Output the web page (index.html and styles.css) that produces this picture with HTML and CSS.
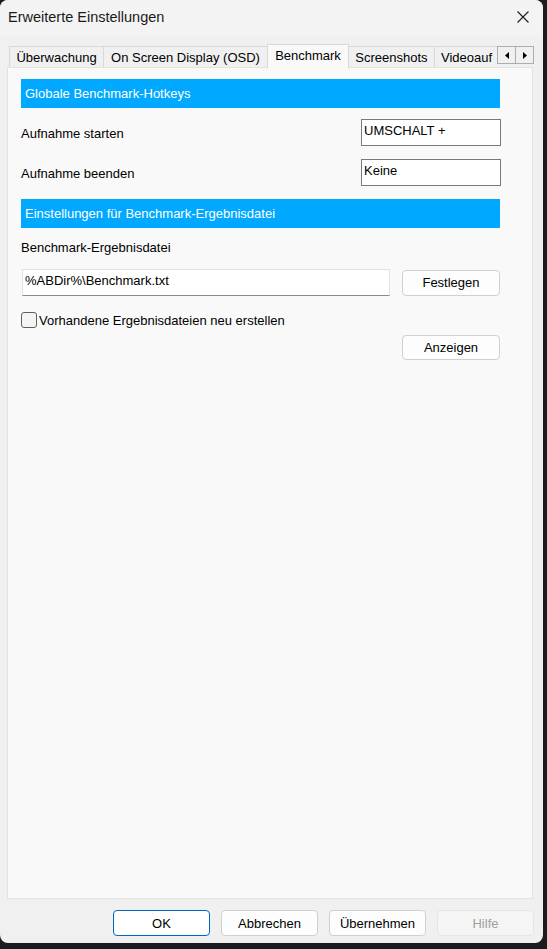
FILE: index.html
```html
<!DOCTYPE html>
<html lang="de">
<head>
<meta charset="utf-8">
<title>Erweiterte Einstellungen</title>
<link rel="stylesheet" href="styles.css">
</head>
<body>
<div class="dialog">
  <div class="titlebar">
    <span class="title">Erweiterte Einstellungen</span>
    <svg class="close" width="12" height="12" viewBox="0 0 12 12" aria-label="Schließen">
      <path d="M0.5 0.5 L11.5 11.5 M11.5 0.5 L0.5 11.5" stroke="#1a1a1a" stroke-width="1.1" fill="none"/>
    </svg>
  </div>

  <div class="tabstrip">
    <div class="tab t1">Überwachung</div>
    <div class="tab t2">On Screen Display (OSD)</div>
    <div class="tab t3 active">Benchmark</div>
    <div class="tab t4">Screenshots</div>
    <div class="tab t5">Videoauf</div>
    <div class="spin">
      <div class="spin-btn left"><svg width="4" height="7" viewBox="0 0 4 7"><path d="M4 0 L0 3.5 L4 7 Z" fill="#000"/></svg></div>
      <div class="spin-btn right"><svg width="4" height="7" viewBox="0 0 4 7"><path d="M0 0 L4 3.5 L0 7 Z" fill="#000"/></svg></div>
    </div>
  </div>

  <div class="panel">
    <div class="section-head">Globale Benchmark-Hotkeys</div>
    <div class="row">
      <span class="label">Aufnahme starten</span>
      <div class="hotkey">UMSCHALT +</div>
    </div>
    <div class="row">
      <span class="label">Aufnahme beenden</span>
      <div class="hotkey">Keine</div>
    </div>
    <div class="section-head">Einstellungen für Benchmark-Ergebnisdatei</div>
    <div class="plain-label">Benchmark-Ergebnisdatei</div>
    <div class="path-row">
      <div class="path-input">%ABDir%\Benchmark.txt</div>
      <div class="btn panel-btn">Festlegen</div>
    </div>
    <div class="check-row">
      <span class="checkbox"></span>
      <span class="check-label">Vorhandene Ergebnisdateien neu erstellen</span>
    </div>
    <div class="btn panel-btn show-btn">Anzeigen</div>
  </div>

  <div class="footer">
    <div class="btn foot-btn default">OK</div>
    <div class="btn foot-btn">Abbrechen</div>
    <div class="btn foot-btn">Übernehmen</div>
    <div class="btn foot-btn disabled">Hilfe</div>
  </div>
</div>
</body>
</html>
```

FILE: styles.css
```css
html, body {
  margin: 0;
  padding: 0;
}

body {
  width: 547px;
  height: 949px;
  background: #1b1c1e;
  font-family: "Liberation Sans", Arial, sans-serif;
  font-size: 13px;
  color: #000;
  overflow: hidden;
}

.dialog {
  width: 543px;
  height: 943px;
  background: #f0f0f0;
  border-radius: 8px;
  overflow: hidden;
  display: flex;
  flex-direction: column;
  box-sizing: border-box;
}

.titlebar {
  height: 36px;
  flex: none;
  display: flex;
  align-items: center;
  justify-content: space-between;
  padding: 0 14px 2px 8px;
  box-sizing: border-box;
  background: #f3f3f3;
}

.title {
  font-size: 14.5px;
  color: #1a1a1a;
}

.close {
  display: block;
}

.tabstrip {
  height: 31px;
  flex: none;
  display: flex;
  align-items: flex-end;
  padding-left: 9px;
  position: relative;
  z-index: 1;
}

.tab {
  height: 21px;
  box-sizing: border-box;
  border: 1px solid #d9d9d9;
  border-bottom: none;
  border-right: none;
  background: #f0f0f0;
  display: flex;
  align-items: center;
  justify-content: center;
  white-space: nowrap;
  padding-top: 1px;
}

.t1 { width: 94px; }
.t2 { width: 164px; }
.t3 { width: 82px; }
.t4 { width: 85px; }
.t5 {
  width: 63px;
  justify-content: flex-start;
  padding-left: 6px;
}

.tab.active {
  height: 24px;
  margin-bottom: -1px;
  background: #f9f9f9;
  border-right: 1px solid #d9d9d9;
  padding-top: 0;
  padding-bottom: 3px;
}

.tab.active + .tab {
  border-left: none;
}

.spin {
  align-self: flex-start;
  margin-top: 10px;
  display: flex;
}

.spin-btn {
  height: 18px;
  box-sizing: border-box;
  border: 1px solid #adadad;
  background: #f0f0f0;
  display: flex;
  align-items: center;
  justify-content: center;
}

.spin-btn.left {
  width: 19px;
}

.spin-btn.right {
  width: 18px;
  border-left: none;
}

.spin-btn svg {
  display: block;
}

.panel {
  flex: none;
  width: 526px;
  height: 832px;
  margin-left: 7px;
  box-sizing: border-box;
  border: 1px solid #e3e3e3;
  background: #f9f9f9;
  padding: 11px 32px 0 13px;
  display: flex;
  flex-direction: column;
}

.section-head {
  height: 29px;
  background: #00a9ff;
  color: #fff;
  display: flex;
  align-items: center;
  padding-left: 4px;
  margin-bottom: 11px;
}

.section-head + .plain-label {
  margin-top: 1px;
}

.row {
  height: 27px;
  display: flex;
  align-items: center;
  justify-content: space-between;
  margin-bottom: 13px;
}

.label {
  padding-top: 1px;
}

.hotkey {
  width: 140px;
  height: 27px;
  box-sizing: border-box;
  border: 1px solid #7a7a7a;
  background: #fff;
  padding: 3px 2px 0;
  line-height: 16px;
  margin-right: -1px;
}

.plain-label {
  line-height: 16px;
  margin-bottom: 13px;
}

.path-row {
  height: 27px;
  display: flex;
  align-items: center;
  justify-content: space-between;
}

.path-input {
  width: 368px;
  height: 27px;
  margin-left: 1px;
  box-sizing: border-box;
  border: 1px solid #e2e2e2;
  border-bottom-color: #8a8a8a;
  background: #fff;
  padding: 3px 2px 0;
  line-height: 16px;
}

.btn {
  box-sizing: border-box;
  border: 1px solid #d0d0d0;
  border-radius: 4px;
  background: #fdfdfd;
  display: flex;
  align-items: center;
  justify-content: center;
}

.panel-btn {
  width: 98px;
  height: 26px;
}

.check-row {
  margin-top: 16px;
  height: 16px;
  display: flex;
  align-items: center;
  gap: 2px;
}

.checkbox {
  width: 16px;
  height: 16px;
  box-sizing: border-box;
  border: 1px solid #5f5f5f;
  border-radius: 3px;
  background: #f4f4f4;
}

.show-btn {
  align-self: flex-end;
  margin-top: 7px;
  height: 25px;
}

.footer {
  flex: none;
  display: flex;
  justify-content: flex-end;
  gap: 11px;
  padding: 11px 9px 0 0;
}

.foot-btn {
  width: 97px;
  height: 26px;
}

.foot-btn.default {
  border-color: #0067c0;
  background: #fff;
}

.foot-btn.disabled {
  background: #f5f5f5;
  border-color: #e5e5e5;
  color: #a0a0a0;
}
```
